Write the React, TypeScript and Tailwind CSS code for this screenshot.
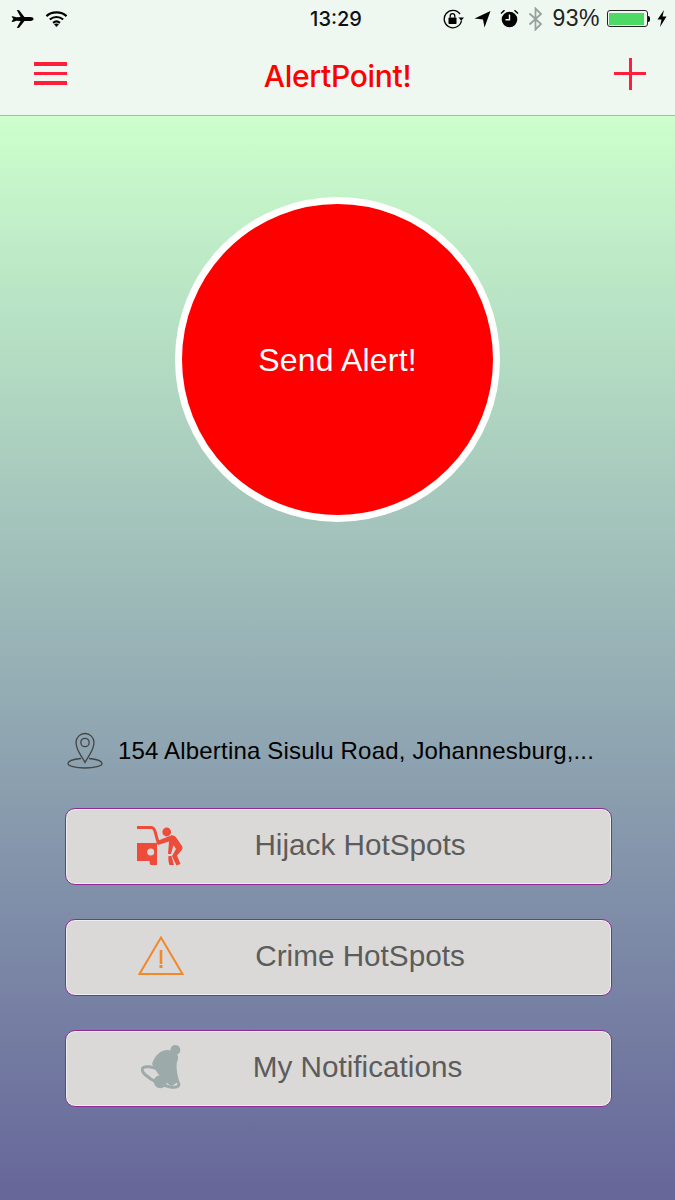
const font = { fontFamily: '"Liberation Sans", Arial, sans-serif' }

const Plane = () => (
  <svg width="23" height="20" viewBox="0 0 24 20" className="fill-black">
    <path d="M0.5 7.5 L2 7 L5.5 8.2 L10 8 L6 0.5 L8.500 0.8 L14 8 L20 8 C22.500 8 23.500 9 23.500 10 C23.500 11 22.500 12 20 12 L14 12 L8.500 19.200 L6 19.500 L10 12 L5.500 11.800 L2 13 L0.500 12.500 L2.500 10 Z" />
  </svg>
)

const Wifi = () => (
  <svg width="23" height="18" viewBox="0 0 24 18" fill="none" className="stroke-black">
    <path d="M1.5 6 C7 0.8 17 0.8 22.500 6" strokeWidth="2.200" />
    <path d="M5 9.600 C9 6 15 6 19 9.600" strokeWidth="2.200" />
    <path d="M8.400 13 C10.500 11.200 13.500 11.200 15.600 13" strokeWidth="2.200" />
    <path d="M9.800 14.600 L12 17.200 L14.200 14.600 C13 13.600 11 13.600 9.800 14.600 Z" className="fill-black" strokeWidth="0.5" />
  </svg>
)

const RotationLock = () => (
  <svg width="22" height="20" viewBox="0 0 22 20" fill="none">
    <path d="M18.500 11.500 A8.700 8.700 0 1 1 17 5" stroke="black" strokeWidth="1.300" />
    <path d="M15.500 8.500 L21 8.500 L18.300 11.800 Z" fill="black" />
    <rect x="5.500" y="8.500" width="8" height="6.500" rx="0.8" fill="black" />
    <path d="M7.200 8.500 V7 A2.300 2.300 0 0 1 11.800 7 V8.500" stroke="black" strokeWidth="1.300" />
  </svg>
)

const Arrow = () => (
  <svg width="17" height="18" viewBox="0 0 17 18" className="fill-black">
    <path d="M0.5 8.500 L16.500 1 L10.500 17.500 L9 9.500 Z" />
  </svg>
)

const Alarm = () => (
  <svg width="19" height="19" viewBox="0 0 19 19" fill="none">
    <circle cx="9.500" cy="10.500" r="7.800" fill="black" />
    <path d="M9.500 5.500 V10.800 H5.500" stroke="#eff8f0" strokeWidth="1.400" />
    <path d="M1 4.500 L4.500 1.200" stroke="black" strokeWidth="1.500" />
    <path d="M18 4.500 L14.500 1.200" stroke="black" strokeWidth="1.500" />
  </svg>
)

const Bluetooth = () => (
  <svg width="15" height="24" viewBox="0 0 15 24" fill="none">
    <path d="M1.500 6.500 L13 17 L7.500 22.500 V1.500 L13 7 L1.500 17.500" stroke="#9aa09c" strokeWidth="1.800" />
  </svg>
)

const Battery = () => (
  <div className="flex items-center">
    <div className="w-[41px] h-[17px] rounded-[3px] border border-[#222] p-[1.5px]">
      <div className="w-[35px] h-full bg-[#4cd964]" />
    </div>
    <div className="w-[2px] h-[6px] bg-black rounded-r-sm" />
  </div>
)

const Bolt = () => (
  <svg width="10" height="17" viewBox="0 0 10 17" className="fill-black">
    <path d="M7 0 L0.500 9.500 H4.500 L3 17 L9.500 6.500 H5.500 Z" />
  </svg>
)

const Pin = () => (
  <svg width="36" height="37" viewBox="0 0 36 37" fill="none" stroke="#444" strokeWidth="1.300">
    <path d="M14 26.500 C6 27.300 1 29.300 1 31.500 C1 34 8.500 36 18 36 C27.500 36 35 34 35 31.500 C35 29.300 30 27.300 22 26.500" />
    <path d="M18 30.500 C14 23 9 18 9 10.500 A9 9 0 0 1 27 10.500 C27 18 22 23 18 30.500 Z" />
    <circle cx="18" cy="10.500" r="4.200" />
  </svg>
)

const Hijack = () => (
  <svg width="47" height="41" viewBox="0 0 47 41" className="fill-[#ee4c3a]">
    <path d="M0 0 H13 C17 0 18.500 2 19.500 5 L23 18 H20 L16.500 5.500 C16 3.500 15 3 13 3 H0 Z" />
    <path d="M0 17 H20 V39 H14 C13 39 12.500 37 12.500 35 H0 Z M13.700 22.500 A3.500 3.500 0 1 0 13.700 29.500 A3.500 3.500 0 1 0 13.700 22.500 Z" fillRule="evenodd" />
    <circle cx="29.700" cy="6" r="4.400" />
    <path d="M20 15 L34 9.500 C36 9 38 10 39.500 12 L45 20 C46 22 45.500 23 44 25 L40 29.500 L43.500 38 L39.500 39.500 L35 30 L39 23 L36.500 19 L34 28 L31 28 L32 15.500 L21 19 Z" />
    <path d="M31.500 30 L34.500 30 L37 39 H32.500 C31.500 36 31 33 31.500 30 Z" />
  </svg>
)

const Warning = () => (
  <svg width="46" height="40" viewBox="0 0 46 40" fill="none" stroke="#f0882c">
    <path d="M23 1.500 L44.500 38 H1.500 Z" strokeWidth="2" />
    <path d="M23 14 V28" strokeWidth="2.600" />
    <path d="M23 29 V32" strokeWidth="3" />
  </svg>
)

const Bell = () => (
  <svg width="40" height="46" viewBox="0 0 40 46" fill="none">
    <circle cx="34.300" cy="5" r="5" fill="#9caaaa" />
    <path d="M11 19 C14 10 20 5 26 5 C33 5 38 9 37 14 C35 19 35 24 38 36 L31 41 C24 38 17 30 11 19 Z" fill="#9caaaa" />
    <ellipse cx="19.500" cy="32" rx="20" ry="6.500" transform="rotate(25 19.500 32)" stroke="#9caaaa" strokeWidth="3" />
    <circle cx="19.300" cy="36.700" r="6.500" fill="#9caaaa" />
  </svg>
)

const buttons = [
  { label: 'Hijack HotSpots', icon: <Hijack />, iconBox: 'left-[71px] top-[17px]', shift: 'pr-0' },
  { label: 'Crime HotSpots', icon: <Warning />, iconBox: 'left-[72px] top-[16px]', shift: 'pr-0' },
  { label: 'My Notifications', icon: <Bell />, iconBox: 'left-[75px] top-[14px]', shift: 'pr-[5px]' },
]

export default function App() {
  return (
    <div style={font} className="w-[675px] h-[1200px] flex flex-col overflow-hidden bg-[#eff8f0]">
      <header className="h-[116px] shrink-0 flex flex-col border-b border-[#a9b8aa]">
        <div className="h-[40px] flex items-center justify-between pl-[11px] pr-[8px] pb-[3px]">
          <div className="flex items-center gap-[11px] w-[220px]">
            <Plane />
            <Wifi />
          </div>
          <span className="text-[20px] text-[#111] font-medium font-['Inter']">13:29</span>
          <div className="flex items-center gap-[9px] w-[226px] justify-end">
            <RotationLock />
            <Arrow />
            <Alarm />
            <Bluetooth />
            <div className="flex items-center gap-[7px]">
              <span className="text-[23px] tracking-[0.5px] text-[#222]">93%</span>
              <div className="flex items-center gap-[7px]">
                <Battery />
                <Bolt />
              </div>
            </div>
          </div>
        </div>
        <div className="flex-1 flex items-center justify-between pl-[34px] pr-[29px] pb-[8px]">
          <div className="w-[33px] flex flex-col gap-[6px]">
            <div className="h-[3.5px] bg-[#ff1f3d]" />
            <div className="h-[3.5px] bg-[#ff1f3d]" />
            <div className="h-[3.5px] bg-[#ff1f3d]" />
          </div>
          <h1 className="mt-[4px] mr-[6px] text-[30px] leading-none text-[#ff0000] font-medium font-['Inter'] tracking-[-0.3px]">AlertPoint!</h1>
          <div className="relative w-[32px] h-[32px]">
            <div className="absolute left-[14.5px] top-0 w-[3px] h-[32px] bg-[#ff1f3d]" />
            <div className="absolute top-[14.5px] left-0 h-[3px] w-[32px] bg-[#ff1f3d]" />
          </div>
        </div>
      </header>

      <main className="flex-1 flex flex-col items-center bg-gradient-to-b from-[#ccffcc] to-[#666699]">
        <button className="mt-[81px] w-[325px] h-[325px] rounded-full bg-[#ff0000] border-[7px] border-white text-white text-[32px] tracking-[0.2px]">
          Send Alert!
        </button>

        <div className="mt-[210px] w-[547px] flex items-center gap-[15px] pl-[3px]">
          <Pin />
          <span className="text-[24px] leading-none text-black tracking-[0.18px] whitespace-nowrap">
            154 Albertina Sisulu Road, Johannesburg,...
          </span>
        </div>

        <div className="mt-[39px] ml-[2px] flex flex-col gap-[34px]">
          {buttons.map((b) => (
            <div
              key={b.label}
              className={`relative w-[547px] h-[77px] rounded-[10px] border border-[#8e2a96] bg-[#dad9d8] shadow-[inset_0_0_0_1px_#eeeeee] flex items-center justify-center pl-[43px] pb-[2px] text-[29.7px] text-[#5c5c5c] ${b.shift}`}
            >
              <div className={`absolute ${b.iconBox}`}>{b.icon}</div>
              {b.label}
            </div>
          ))}
        </div>
      </main>
    </div>
  )
}
